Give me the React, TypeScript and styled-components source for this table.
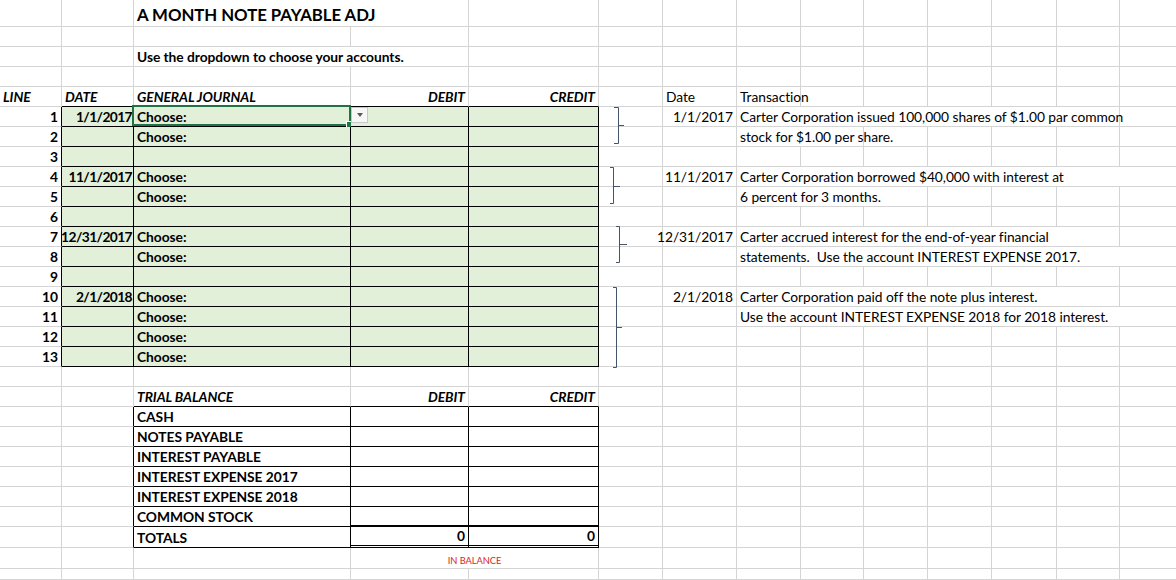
import React from 'react';
import styled, { createGlobalStyle } from 'styled-components';

const GlobalStyle = createGlobalStyle`
  html, body { margin: 0; padding: 0; background: #ffffff; }
  body { font-family: Lato, "Liberation Sans", sans-serif; color: #000; }
`;

const COLS = [62, 72, 217, 118, 130, 64, 74, 64, 63, 64, 64, 65, 63];
const ROWS = [27, 20, 20, 20, 20, ...Array(13).fill(20), 20, 20, ...Array(6).fill(20), 21, 21];
const NCOLS = 14;
const BODY = 13.8;

type Edge = 'grid' | 'black' | 'thick' | 'double' | 'none';
const edge = (e: Edge = 'grid') =>
  ({
    grid: '1px solid #d4d4d4',
    black: '1px solid #000000',
    thick: '2px solid #000000',
    double: '3px double #000000',
    none: '0 none',
  }[e]);

const Sheet = styled.div`
  position: relative;
  display: grid;
  grid-template-columns: ${COLS.map((c) => c + 'px').join(' ')} 1fr;
  grid-template-rows: ${ROWS.map((r) => r + 'px').join(' ')} 1fr;
  width: 1176px;
  height: 580px;
  overflow: hidden;
`;

type Align = 'left' | 'right' | 'center';

const Cell = styled.div<{
  $align?: Align;
  $bold?: boolean;
  $italic?: boolean;
  $fill?: boolean;
  $right?: Edge;
  $bottom?: Edge;
  $span?: number;
  $size?: number;
  $color?: string;
  $tight?: boolean;
}>`
  box-sizing: border-box;
  position: relative;
  grid-column: span ${(p) => p.$span ?? 1};
  display: flex;
  align-items: flex-end;
  justify-content: ${(p) =>
    p.$align === 'right' ? 'flex-end' : p.$align === 'center' ? 'center' : 'flex-start'};
  padding: 0 ${(p) => (p.$tight ? 1 : 3)}px 2px 3px;
  border-right: ${(p) => edge(p.$right)};
  border-bottom: ${(p) => edge(p.$bottom)};
  background: ${(p) => (p.$fill ? '#e2efd9' : 'transparent')};
  font-size: ${(p) => p.$size ?? BODY}px;
  font-weight: ${(p) => (p.$bold ? 700 : 400)};
  font-style: ${(p) => (p.$italic ? 'italic' : 'normal')};
  letter-spacing: ${(p) => (p.$tight ? '-0.6px' : '-0.05px')};
  color: ${(p) => p.$color ?? '#000000'};
  white-space: pre;
  line-height: 1.1;
`;

const Selection = styled.div`
  position: absolute;
  left: -2px;
  top: -2px;
  width: calc(100% + 3px);
  height: calc(100% + 2px);
  box-sizing: border-box;
  border: 2px solid #217346;
  pointer-events: none;
  &::after {
    content: '';
    position: absolute;
    right: -4px;
    bottom: -4px;
    width: 5px;
    height: 5px;
    background: #217346;
    border: 1px solid #ffffff;
  }
`;

const DropButton = styled.div`
  position: absolute;
  left: calc(100% + 1px);
  top: 0;
  width: 17px;
  height: 16px;
  box-sizing: border-box;
  border: 1px solid #c8c8c8;
  background: #f7f7f7;
  display: flex;
  align-items: center;
  justify-content: center;
  z-index: 2;
  &::before {
    content: '';
    width: 0;
    height: 0;
    border-left: 3.5px solid transparent;
    border-right: 3.5px solid transparent;
    border-top: 4px solid #595959;
  }
`;

const Shapes = styled.svg`
  position: absolute;
  left: 0;
  top: 0;
  pointer-events: none;
`;

type CellSpec = {
  col: number;
  span?: number;
  text?: string;
  align?: Align;
  bold?: boolean;
  italic?: boolean;
  fill?: boolean;
  right?: Edge;
  bottom?: Edge;
  size?: number;
  color?: string;
  tight?: boolean;
  extra?: React.ReactNode;
};

function buildRow(key: string, specs: CellSpec[]) {
  const byCol = new Map(specs.map((s) => [s.col, s]));
  const out: React.ReactNode[] = [];
  let c = 0;
  while (c < NCOLS) {
    const s = byCol.get(c);
    const span = s?.span ?? 1;
    const last = c + span >= NCOLS;
    out.push(
      <Cell
        key={`${key}-${c}`}
        $span={span}
        $align={s?.align}
        $bold={s?.bold}
        $italic={s?.italic}
        $fill={s?.fill}
        $right={last ? 'none' : s?.right}
        $bottom={s?.bottom}
        $size={s?.size}
        $color={s?.color}
        $tight={s?.tight}
      >
        {s?.text}
        {s?.extra}
      </Cell>
    );
    c += span;
  }
  return out;
}

type JournalRow = {
  n: number;
  date?: string;
  choose?: boolean;
  text?: string;
  span?: number;
};

const journal: JournalRow[] = [
  { n: 1, date: '1/1/2017', choose: true, text: 'Carter Corporation issued 100,000 shares of $1.00 par common', span: 6 },
  { n: 2, choose: true, text: 'stock for $1.00 per share.', span: 2 },
  { n: 3 },
  { n: 4, date: '11/1/2017', choose: true, text: 'Carter Corporation borrowed $40,000 with interest at', span: 7 },
  { n: 5, choose: true, text: '6 percent for 3 months.', span: 3 },
  { n: 6 },
  { n: 7, date: '12/31/2017', choose: true, text: 'Carter accrued interest for the end-of-year financial', span: 6 },
  { n: 8, choose: true, text: 'statements.  Use the account INTEREST EXPENSE 2017.', span: 7 },
  { n: 9 },
  { n: 10, date: '2/1/2018', choose: true, text: 'Carter Corporation paid off the note plus interest.', span: 6 },
  { n: 11, choose: true, text: 'Use the account INTEREST EXPENSE 2018 for 2018 interest.', span: 7 },
  { n: 12, choose: true },
  { n: 13, choose: true },
];

const accounts = [
  'CASH',
  'NOTES PAYABLE',
  'INTEREST PAYABLE',
  'INTEREST EXPENSE 2017',
  'INTEREST EXPENSE 2018',
  'COMMON STOCK',
];

const brackets = [
  { x: 618, top: 107, bottom: 143, tickL: 614, mid: 125, tickR: 624 },
  { x: 613, top: 167, bottom: 203, tickL: 610, mid: 186, tickR: 620 },
  { x: 619, top: 226, bottom: 262, tickL: 616, mid: 244, tickR: 627 },
  { x: 616, top: 287, bottom: 367, tickL: 613, mid: 327, tickR: 622 },
];

export default function App() {
  const rows: React.ReactNode[] = [];

  rows.push(buildRow('title', [{ col: 2, span: 2, text: 'A MONTH NOTE PAYABLE ADJ', bold: true, size: 16.8 }]));
  rows.push(buildRow('blank0', []));
  rows.push(buildRow('instr', [{ col: 2, span: 2, text: 'Use the dropdown to choose your accounts.', bold: true }]));
  rows.push(buildRow('blank1', []));
  rows.push(
    buildRow('head', [
      { col: 0, text: 'LINE', bold: true, italic: true },
      { col: 1, text: 'DATE', bold: true, italic: true, bottom: 'black' },
      { col: 2, text: 'GENERAL JOURNAL', bold: true, italic: true, bottom: 'black' },
      { col: 3, text: 'DEBIT', bold: true, italic: true, align: 'right', bottom: 'black' },
      { col: 4, text: 'CREDIT', bold: true, italic: true, align: 'right', bottom: 'black' },
      { col: 6, text: 'Date' },
      { col: 7, text: 'Transaction' },
    ])
  );

  journal.forEach((r) => {
    const specs: CellSpec[] = [
      { col: 0, text: String(r.n), bold: true, align: 'right', right: 'black' },
      { col: 1, text: r.date, bold: true, tight: true, align: 'right', fill: true, right: 'black', bottom: 'black' },
      {
        col: 2,
        text: r.choose ? 'Choose:' : undefined,
        bold: true,
        fill: true,
        right: 'black',
        bottom: 'black',
        extra:
          r.n === 1 ? (
            <>
              <Selection />
              <DropButton />
            </>
          ) : undefined,
      },
      { col: 3, fill: true, right: 'black', bottom: 'black' },
      { col: 4, fill: true, right: 'black', bottom: 'black' },
    ];
    if (r.date) specs.push({ col: 6, text: r.date, align: 'right' });
    if (r.text) specs.push({ col: 7, text: r.text, span: r.span });
    rows.push(buildRow(`j${r.n}`, specs));
  });

  rows.push(buildRow('blank2', []));
  rows.push(
    buildRow('tbhead', [
      { col: 2, text: 'TRIAL BALANCE', bold: true, italic: true, bottom: 'black' },
      { col: 3, text: 'DEBIT', bold: true, italic: true, align: 'right', bottom: 'black' },
      { col: 4, text: 'CREDIT', bold: true, italic: true, align: 'right', bottom: 'black' },
    ])
  );
  accounts.forEach((a, i) => {
    const last = i === accounts.length - 1;
    rows.push(
      buildRow(`tb${i}`, [
        { col: 1, right: 'black' },
        { col: 2, text: a, bold: true, right: 'black', bottom: 'black' },
        { col: 3, right: 'black', bottom: last ? 'thick' : 'black' },
        { col: 4, right: 'black', bottom: last ? 'thick' : 'black' },
      ])
    );
  });
  rows.push(
    buildRow('totals', [
      { col: 1, right: 'black' },
      { col: 2, text: 'TOTALS', bold: true, right: 'black', bottom: 'black' },
      { col: 3, text: '0', bold: true, align: 'right', right: 'black', bottom: 'double' },
      { col: 4, text: '0', bold: true, align: 'right', right: 'black', bottom: 'double' },
    ])
  );
  rows.push(
    buildRow('balance', [
      { col: 3, span: 2, text: 'IN BALANCE', align: 'center', size: 9.3, color: '#d9262b' },
    ])
  );
  rows.push(buildRow('end', []));

  return (
    <>
      <GlobalStyle />
      <Sheet>
        {rows}
        <Shapes width={1176} height={580} viewBox="0 0 1176 580">
          {brackets.map((b, i) => (
            <path
              key={i}
              d={`M${b.tickL} ${b.top + 0.5} H${b.x + 0.5} V${b.bottom + 0.5} H${b.tickL} M${b.x + 0.5} ${b.mid + 0.5} H${b.tickR}`}
              fill="none"
              stroke="#44546a"
              strokeWidth={1}
            />
          ))}
        </Shapes>
      </Sheet>
    </>
  );
}
